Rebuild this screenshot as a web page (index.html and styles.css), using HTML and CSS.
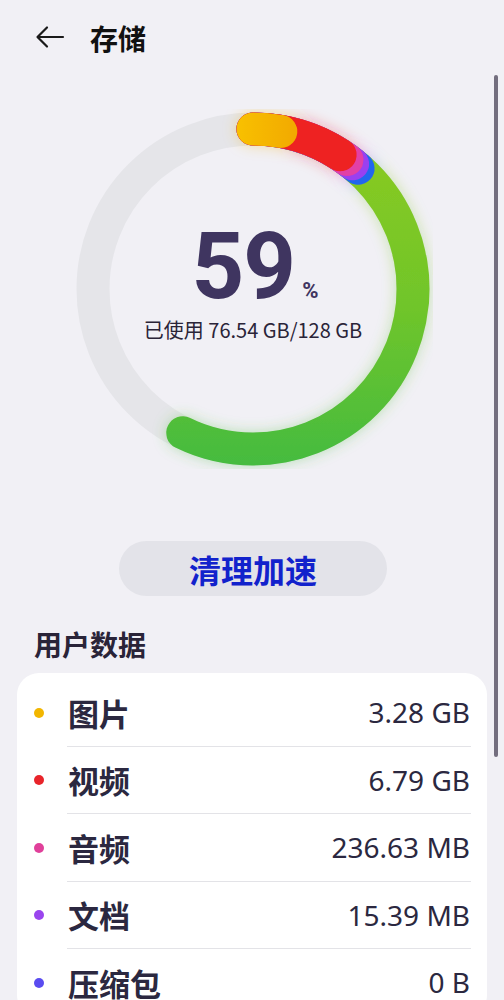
FILE: index.html
```html
<!DOCTYPE html>
<html lang="zh">
<head>
<meta charset="utf-8">
<title>存储</title>
<link rel="stylesheet" href="styles.css">
</head>
<body>
<div class="page">
  <header class="topbar">
    <svg class="back" width="30" height="24" viewBox="0 0 30 24">
      <path d="M28 12H3M12 2.5L2.5 12L12 21.5" fill="none" stroke="#1a1a1a" stroke-width="2.2" stroke-linecap="round" stroke-linejoin="round"/>
    </svg>
    <h1 class="title">存储</h1>
  </header>

  <section class="ring-wrap">
    <svg class="ring" width="360" height="360" viewBox="0 0 360 360">
      <defs>
        <linearGradient id="gGreen" gradientUnits="userSpaceOnUse" x1="360" y1="180" x2="0" y2="180">
          <stop offset="0" stop-color="#8fcb20"/>
          <stop offset="0.55" stop-color="#70c52a"/>
          <stop offset="1" stop-color="#44bb40"/>
        </linearGradient>
        <linearGradient id="gYellow" gradientUnits="userSpaceOnUse" x1="0" y1="168" x2="0" y2="232">
          <stop offset="0" stop-color="#f8bf00"/>
          <stop offset="1" stop-color="#f1a600"/>
        </linearGradient>
        <filter id="glow" x="-20%" y="-20%" width="140%" height="140%">
          <feGaussianBlur in="SourceGraphic" stdDeviation="7" result="b"/>
          <feColorMatrix in="b" type="matrix" values="1 0 0 0 0  0 1 0 0 0  0 0 1 0 0  0 0 0 0.35 0" result="bb"/>
          <feMerge><feMergeNode in="bb"/><feMergeNode in="SourceGraphic"/></feMerge>
        </filter>
      </defs>
      <circle cx="180" cy="180" r="160" fill="none" stroke="#e5e5e9" stroke-width="33"/>
      <g transform="rotate(-90 180 180)" fill="none" stroke-width="33" stroke-linecap="round" filter="url(#glow)">
        <circle cx="180" cy="180" r="160" stroke="url(#gGreen)" stroke-dasharray="575.2 1005.3"/>
        <circle cx="180" cy="180" r="160" stroke="#2466ee" stroke-dasharray="114.5 1005.3"/>
        <circle cx="180" cy="180" r="160" stroke="#9a3ff0" stroke-dasharray="107.5 1005.3"/>
        <circle cx="180" cy="180" r="160" stroke="#e23fa6" stroke-dasharray="100.5 1005.3"/>
        <circle cx="180" cy="180" r="160" stroke="#ee2020" stroke-dasharray="92 1005.3"/>
        <circle cx="180" cy="180" r="160" stroke="url(#gYellow)" stroke-dasharray="28 1005.3"/>
      </g>
    </svg>
    <div class="ring-text">
      <div class="pct"><span class="num">59</span><span class="sign">%</span></div>
      <div class="used">已使用 76.54 GB/128 GB</div>
    </div>
  </section>

  <div class="btn-row">
    <button class="clean">清理加速</button>
  </div>

  <h2 class="section">用户数据</h2>

  <div class="card">
    <div class="row"><span class="dot" style="background:#f2b600"></span><div class="body"><span class="label">图片</span><span class="value">3.28 GB</span></div></div>
    <div class="row"><span class="dot" style="background:#e8242a"></span><div class="body"><span class="label">视频</span><span class="value">6.79 GB</span></div></div>
    <div class="row"><span class="dot" style="background:#e0409a"></span><div class="body"><span class="label">音频</span><span class="value">236.63 MB</span></div></div>
    <div class="row"><span class="dot" style="background:#9a45ee"></span><div class="body"><span class="label">文档</span><span class="value">15.39 MB</span></div></div>
    <div class="row"><span class="dot" style="background:#5a4cf0"></span><div class="body"><span class="label">压缩包</span><span class="value">0 B</span></div></div>
  </div>

  <div class="scrollbar"></div>
</div>
</body>
</html>
```

FILE: styles.css
```css
* { box-sizing: border-box; }
html, body {
  margin: 0;
  padding: 0;
  background: #f1f0f5;
  height: 1000px;
  overflow: hidden;
}
body {
  font-family: "Noto Sans CJK SC", "Noto Sans", sans-serif;
  color: #2a2438;
}
.page {
  position: relative;
  width: 504px;
}
.topbar {
  height: 76px;
  display: flex;
  align-items: center;
  padding-left: 35px;
}
.back { display: block; margin-top: -2px; }
.title {
  margin: 0 0 0 25px;
  font-size: 28px;
  font-weight: 700;
  color: #111111;
  line-height: 1;
  margin-top: -1px;
}
.ring-wrap {
  margin-top: 33px;
  display: grid;
  justify-content: center;
  justify-items: center;
  align-items: center;
}
.ring { grid-area: 1 / 1; display: block; margin-left: 2px; }
.ring-text {
  grid-area: 1 / 1;
  display: flex;
  flex-direction: column;
  align-items: center;
  margin-top: -6px;
}
.pct {
  display: flex;
  align-items: baseline;
  color: #3f3560;
  line-height: 0.8;
  margin-left: 6px;
}
.num {
  font-family: "Roboto", "Noto Sans", sans-serif;
  font-weight: 700;
  font-size: 92px;
  letter-spacing: -1px;
}
.sign {
  font-family: "Roboto", sans-serif;
  font-weight: 700;
  font-size: 22px;
  margin-left: 7px;
}
.used {
  margin-top: 14px;
  font-size: 20px;
  color: #2a2438;
  line-height: 1.2;
  margin-left: 2px;
}
.btn-row {
  display: flex;
  justify-content: center;
  margin-top: 72px;
}
.clean {
  width: 268px;
  height: 55px;
  border: none;
  border-radius: 28px;
  background: #e3e3e9;
  color: #1222cc;
  font-family: "Noto Sans CJK SC", sans-serif;
  font-size: 32px;
  font-weight: 700;
  line-height: 1;
  margin-left: 2px;
  padding: 0;
}
.section {
  margin: 30px 0 11px 34px;
  font-size: 28px;
  font-weight: 700;
  line-height: 36px;
  color: #2a2438;
}
.card {
  margin: 0 17px;
  background: #ffffff;
  border-radius: 22px;
  padding-top: 6px;
}
.row {
  display: flex;
  align-items: center;
  height: 67.5px;
  padding-left: 17px;
}
.dot {
  width: 10px;
  height: 10px;
  border-radius: 50%;
  flex: none;
}
.body {
  margin-left: 23px;
  margin-right: 16px;
  flex: 1;
  height: 100%;
  display: flex;
  align-items: center;
  justify-content: space-between;
  border-bottom: 1px solid #e3e3e7;
}
.label {
  font-size: 31px;
  font-weight: 700;
  color: #2b2840;
  margin-left: 1px;
}
.value {
  font-family: "Noto Sans", sans-serif;
  font-size: 28px;
  color: #2b2840;
  margin-right: 1px;
}
.scrollbar {
  position: absolute;
  left: 494px;
  top: 75px;
  width: 4px;
  height: 682px;
  border-radius: 2px;
  background: #736e7e;
}
```
